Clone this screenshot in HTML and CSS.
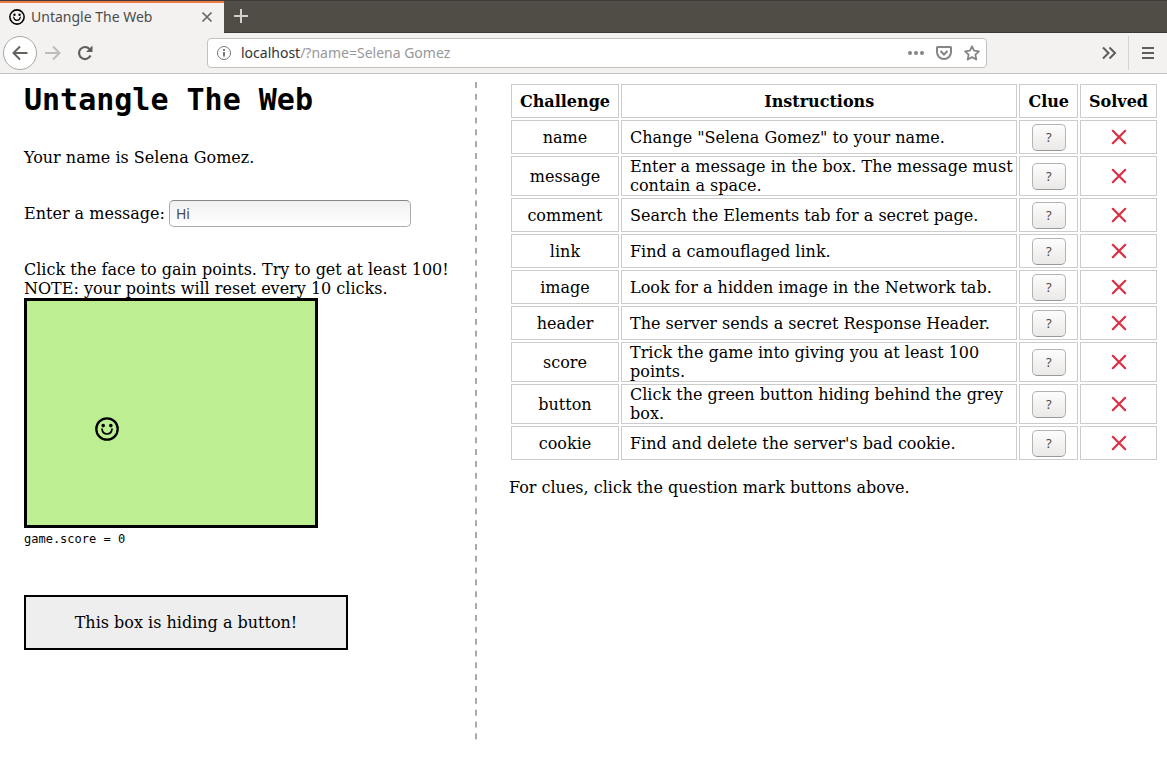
FILE: index.html
```html
<!DOCTYPE html>
<html lang="en">
<head>
<meta charset="utf-8">
<title>Untangle The Web</title>
<link rel="stylesheet" href="styles.css">
</head>
<body>
<svg class="sprite" aria-hidden="true">
  <symbol id="face" viewBox="0 0 24 24">
    <circle cx="12" cy="12" r="10.7" fill="none" stroke="#000" stroke-width="2.3"/>
    <circle cx="8.2" cy="8.6" r="1.8"/>
    <circle cx="15.8" cy="8.6" r="1.8"/>
    <path d="M7 12.200c.4 3 2.500 4.800 5 4.800s4.600-1.800 5-4.800" fill="none" stroke="#000" stroke-width="1.700" stroke-linecap="round"/>
  </symbol>
  <symbol id="cross" viewBox="0 0 16 16">
    <path d="M1.800 1.800 14.200 14.200M14.200 1.800 1.800 14.200" fill="none" stroke="#dd2e44" stroke-width="2.200" stroke-linecap="round"/>
  </symbol>
</svg>
<header class="browser">
  <div class="tabs">
    <div class="tab">
      <svg class="icon16"><use href="#face"/></svg>
      <span class="tab-title">Untangle The Web</span>
      <button class="plain" aria-label="Close tab"><svg class="icon16" viewBox="0 0 16 16"><path d="M3.500 3.500l9 9M12.500 3.500l-9 9" fill="none" stroke="#666" stroke-width="1.700"/></svg></button>
    </div>
    <button class="plain new-tab" aria-label="New tab"><svg class="icon16" viewBox="0 0 16 16"><path d="M8 1v14M1 8h14" stroke="#d0cfca" stroke-width="2"/></svg></button>
  </div>
  <div class="toolbar">
    <div class="nav">
      <button class="plain back" aria-label="Back"><svg class="icon16" viewBox="0 0 16 16"><path d="M15.500 8H1.500M8 1.500L1.500 8 8 14.500" fill="none" stroke="#65635f" stroke-width="2"/></svg></button>
      <button class="plain" aria-label="Forward"><svg class="icon16" viewBox="0 0 16 16"><path d="M0 8h14.500M8 1.500L14.500 8 8 14.500" fill="none" stroke="#bebdba" stroke-width="2"/></svg></button>
      <button class="plain" aria-label="Reload"><svg class="icon16" viewBox="0 0 16 16"><path d="M12.500 4A6 6 0 1 0 13.500 10.500" fill="none" stroke="#605e5b" stroke-width="2.200"/><path d="M15.500 0.500V7H9z" fill="#605e5b"/></svg></button>
    </div>
    <div class="address">
      <svg class="icon16" viewBox="0 0 16 16"><circle cx="8" cy="8" r="6.500" fill="none" stroke="#777" stroke-width="1"/><path d="M8 7v4.500M8 4v2" stroke="#777" stroke-width="2"/></svg>
      <span class="url"><span class="host">localhost</span>/?name=Selena Gomez</span>
      <div class="actions">
        <button class="plain" aria-label="Page actions"><svg class="icon16" viewBox="0 0 16 16" fill="#878583"><circle cx="2" cy="8" r="2"/><circle cx="8" cy="8" r="2"/><circle cx="14" cy="8" r="2"/></svg></button>
        <button class="plain" aria-label="Save to Pocket"><svg class="icon16" viewBox="0 0 16 16" fill="none" stroke="#878583" stroke-width="2"><path d="M1 2.500Q1 2 1.500 2h13q.5 0 .5.500V7a7 7 0 0 1-14 0z"/><path d="M4.500 6L8 9.500 11.500 6"/></svg></button>
        <button class="plain" aria-label="Bookmark"><svg class="icon16" viewBox="0 0 16 16"><path d="M8 1.300l2.100 4.400 4.800.6-3.500 3.300.9 4.900L8 12.100l-4.300 2.400.9-4.900L1.100 6.300l4.800-.6z" fill="none" stroke="#878583" stroke-width="1.800" stroke-linejoin="round"/></svg></button>
      </div>
    </div>
    <div class="tools">
      <button class="plain" aria-label="More tools"><svg class="icon16" viewBox="0 0 16 16"><path d="M2 2.500L7.500 8 2 13.500M8.500 2.500L14 8l-5.500 5.500" fill="none" stroke="#605e5b" stroke-width="2"/></svg></button>
      <button class="plain menu" aria-label="Open menu"><svg class="icon16" viewBox="0 0 16 16"><path d="M2 3h12M2 8h12M2 13h12" stroke="#605e5b" stroke-width="2"/></svg></button>
    </div>
  </div>
</header>
<main class="page">
  <section class="playground">
    <h1 class="title">Untangle The Web</h1>
    <p class="greeting">Your name is Selena Gomez.</p>
    <div class="field">
      <label for="message">Enter a message:</label>
      <input class="message" id="message" type="text" value="Hi">
    </div>
    <p class="rules">Click the face to gain points. Try to get at least 100!<br>NOTE: your points will reset every 10 clicks.</p>
    <div class="game"><button class="plain face" aria-label="Face"><svg class="face-icon"><use href="#face"/></svg></button></div>
    <p class="score">game.score = 0</p>
    <div class="cover">This box is hiding a button!</div>
  </section>
  <section class="challenges">
    <table class="list">
      <thead><tr><th>Challenge</th><th class="wide">Instructions</th><th>Clue</th><th>Solved</th></tr></thead>
      <tbody>
        <tr><td>name</td><td class="text">Change "Selena Gomez" to your name.</td><td><button class="clue">?</button></td><td><svg class="icon16"><use href="#cross"/></svg></td></tr>
        <tr><td>message</td><td class="text">Enter a message in the box. The message must contain a space.</td><td><button class="clue">?</button></td><td><svg class="icon16"><use href="#cross"/></svg></td></tr>
        <tr><td>comment</td><td class="text">Search the Elements tab for a secret page.</td><td><button class="clue">?</button></td><td><svg class="icon16"><use href="#cross"/></svg></td></tr>
        <tr><td>link</td><td class="text">Find a camouflaged link.</td><td><button class="clue">?</button></td><td><svg class="icon16"><use href="#cross"/></svg></td></tr>
        <tr><td>image</td><td class="text">Look for a hidden image in the Network tab.</td><td><button class="clue">?</button></td><td><svg class="icon16"><use href="#cross"/></svg></td></tr>
        <tr><td>header</td><td class="text">The server sends a secret Response Header.</td><td><button class="clue">?</button></td><td><svg class="icon16"><use href="#cross"/></svg></td></tr>
        <tr><td>score</td><td class="text">Trick the game into giving you at least 100 points.</td><td><button class="clue">?</button></td><td><svg class="icon16"><use href="#cross"/></svg></td></tr>
        <tr><td>button</td><td class="text">Click the green button hiding behind the grey box.</td><td><button class="clue">?</button></td><td><svg class="icon16"><use href="#cross"/></svg></td></tr>
        <tr><td>cookie</td><td class="text">Find and delete the server's bad cookie.</td><td><button class="clue">?</button></td><td><svg class="icon16"><use href="#cross"/></svg></td></tr>
      </tbody>
    </table>
    <p class="hint">For clues, click the question mark buttons above.</p>
  </section>
</main>
</body>
</html>
```
FILE: styles.css
```css
* { box-sizing: border-box; }
body {
  margin: 0;
  min-height: 100vh;
  display: flex;
  flex-direction: column;
  background: #fff;
  color: #000;
  font: 16px/19px "DejaVu Serif", serif;
}
h1, p { margin: 0; }
.sprite { display: none; }
.icon16 { width: 16px; height: 16px; display: block; flex: none; }
.plain { border: 0; padding: 0; background: none; display: grid; place-items: center; }

.browser { font: 14px/20px "Noto Sans", sans-serif; color: #4c4c4c; }
.tabs { display: flex; height: 33px; background: #504d46; border-top: 1px solid #3c3b37; border-bottom: 1px solid #3a3935; }
.tab {
  display: flex;
  align-items: center;
  gap: 6px;
  width: 224px;
  height: 32px;
  padding: 0 9px 2px;
  background: #f3f2f1;
  border-top: 2px solid #f07746;
}
.tab-title { flex: 1; white-space: nowrap; }
.new-tab { width: 34px; padding-bottom: 2px; }
.toolbar {
  display: flex;
  align-items: center;
  height: 41px;
  background: #f3f2f1;
  border-bottom: 1px solid #c5c2c0;
}
.nav { display: flex; align-items: center; gap: 16px; padding-left: 3px; flex: 0 0 207px; }
.nav .back { width: 34px; height: 34px; border: 1px solid #aaa8a5; border-radius: 50%; background: #fff; margin-right: -8px; }
.address {
  flex: 1;
  display: flex;
  align-items: center;
  gap: 9px;
  height: 30px;
  padding: 0 6px 0 8px;
  background: #fff;
  border: 1px solid #c4c2c0;
  border-radius: 4px;
}
.url { flex: 1; color: #989898; white-space: nowrap; }
.host { color: #333; }
.actions { display: flex; gap: 12px; }
.tools { flex: 0 0 180px; display: flex; justify-content: flex-end; align-items: center; gap: 11px; }
.menu { width: 39px; height: 34px; border-left: 1px solid #d5d3d1; }

.page { flex: 1; display: grid; grid-template-columns: 11fr 16fr; padding: 8px 8px 39px; }
.playground {
  padding: 0 16px;
  background: linear-gradient(#a9a9a9 50%, transparent 50%) right top / 2px 1.8% repeat-y;
}
.title { font: bold 30px/35px "DejaVu Sans Mono", monospace; }
.greeting { margin-top: 31px; }
.field { display: flex; align-items: center; gap: 4px; margin-top: 33px; }
.message {
  width: 242px;
  height: 27px;
  padding: 0 6px;
  border: 1px solid #aaa;
  border-top-color: #888;
  border-radius: 5px;
  background: linear-gradient(#f1f1f1, #fff);
  color: #4c4c4c;
  font: 14px "Noto Sans", sans-serif;
}
.rules { margin-top: 33px; }
.game { position: relative; width: 294px; height: 230px; border: 3px solid #000; background: #bdee92; }
.face { position: absolute; left: 68px; top: 116px; }
.face-icon { width: 24px; height: 24px; display: block; }
.score { margin-top: 4px; font: 12px/14px "DejaVu Sans Mono", monospace; }
.cover { width: 324px; margin-top: 49px; padding: 16px; border: 2px solid #000; background: #eee; text-align: center; }

.challenges { padding-left: 32px; }
.list { width: 100%; border-spacing: 2px; }
.list th, .list td { height: 34px; padding: 0 8px; border: 1px solid #ccc; text-align: center; }
.list .wide { width: 100%; }
.list .text { padding-right: 2px; text-align: left; }
.list .icon16 { margin: 0 auto; }
.clue {
  display: block;
  width: 34px;
  height: 27px;
  margin: 1px auto 0;
  padding: 0 0 1px;
  border: 1px solid #b5b3b0;
  border-bottom-color: #999;
  border-radius: 5px;
  background: linear-gradient(#fdfdfd, #ebe9e7);
  color: #4c4c4c;
  font: 13px "Noto Sans", sans-serif;
}
.hint { margin-top: 16px; }
```
